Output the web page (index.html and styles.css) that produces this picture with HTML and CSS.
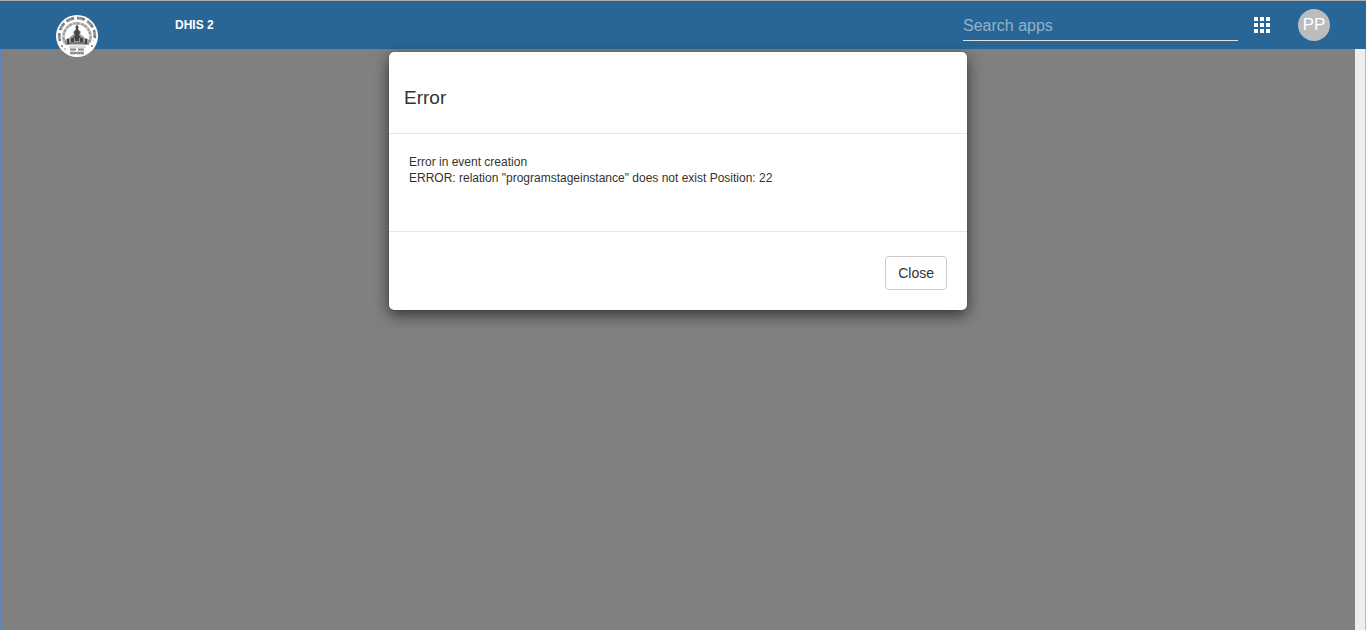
FILE: index.html
```
<!DOCTYPE html>
<html lang="en">
<head>
  <meta charset="UTF-8" />
  <meta name="viewport" content="width=device-width, initial-scale=1.0" />
  <title>DHIS 2</title>
  <link rel="stylesheet" href="styles.css">
</head>
<body>
  <header class="header">
    <a class="logo" href="#" aria-label="Home">
      <svg width="44" height="44" viewBox="0 0 44 44" fill="none">
        <circle cx="22" cy="22" r="21" fill="#fff" />
        <!-- lettering rings -->
        <path d="M5 27 A17.8 17.8 0 1 1 39 27" stroke="#aaa" stroke-width="3" stroke-dasharray="8 3" />
        <path d="M5 27 A17.8 17.8 0 1 1 39 27" stroke="#777" stroke-width="2" stroke-dasharray="2 1 1 1 3 3" />
        <path d="M10 29 A13.500 13.500 0 1 1 34 29" stroke="#ccc" stroke-width="3" />
        <path d="M10 29 A13.500 13.500 0 1 1 34 29" stroke="#999" stroke-width="2" stroke-dasharray="2 1 3 2" />
        <path d="M15 35.500h6M23 35.500h6" stroke="#888" stroke-width="2" />
        <path d="M15 39h5M22 39h7" stroke="#aaa" stroke-width="3" />
        <path d="M16 39h12" stroke="#888" stroke-width="2" stroke-dasharray="2 1 3 1" />
        <circle cx="7" cy="32" r="1" fill="#777" />
        <circle cx="37" cy="32" r="1" fill="#777" />
        <circle cx="10" cy="35" r="1" fill="#bbb" />
        <!-- emblem -->
        <path d="M22 10l2 3-1 2 3 3-1 2 4 3v2H15v-2l4-3-1-2 3-3-1-2z" fill="#999" />
        <path d="M22 11l1 2v3l2 2-1 3 2 3h-8l2-3-1-3 2-2v-3z" fill="#444" />
        <path d="M13 24h18l3 2v5H10v-5z" fill="#999" />
        <path d="M12 25h2v5h-2zM16 24h3v4h-3zM25 24h3v4h-3zM30 25h2v5h-2zM20 24h4v3h-4z" fill="#444" />
        <path d="M14 29h16" stroke="#555" />
        <path d="M15 31h14" stroke="#ddd" />
        <path d="M14 33h17" stroke="#bbb" />
      </svg>
    </a>
    <h1 class="title">DHIS 2</h1>
    <input type="text" class="search" placeholder="Search apps" aria-label="Search apps" />
    <button class="apps" aria-label="Apps">
      <svg width="16" height="16" viewBox="0 0 16 16" fill="#fff">
        <path d="M0 0h4v4H0zM6 0h4v4H6zM12 0h4v4h-4zM0 6h4v4H0zM6 6h4v4H6zM12 6h4v4h-4zM0 12h4v4H0zM6 12h4v4H6zM12 12h4v4h-4z" />
      </svg>
    </button>
    <button class="profile">PP</button>
  </header>

  <main class="content">
    <div class="overlay">
      <section class="dialog" role="dialog" aria-labelledby="dialog-title">
        <div class="dialog-header">
          <h2 id="dialog-title">Error</h2>
        </div>
        <div class="dialog-body">
          <p>Error in event creation</p>
          <p>ERROR: relation "programstageinstance" does not exist Position: 22</p>
        </div>
        <div class="dialog-footer">
          <button class="close">Close</button>
        </div>
      </section>
    </div>
  </main>
  <script>
    document.querySelector('.close').addEventListener('click', () => {
      document.querySelector('.dialog').hidden = true;
    });
  </script>
</body>
</html>
```
FILE: styles.css
```
* {
  box-sizing: border-box;
}
body {
  margin: 0;
  min-height: 100vh;
  display: flex;
  flex-direction: column;
  font-family: "Liberation Sans", Arial, sans-serif;
  font-size: 12px;
  color: #333;
}
h1, h2, p {
  margin: 0;
}
button {
  font-family: inherit;
  cursor: pointer;
}
.header {
  display: flex;
  align-items: center;
  height: 49px;
  padding: 0 36px 0 55px;
  border-top: 1px solid #aaa;
  background: #276696;
}
.logo {
  align-self: flex-start;
  height: 44px;
  margin-top: 13px;
  z-index: 1;
}
.logo svg {
  display: block;
}
.title {
  margin-left: 76px;
  font-size: 12px;
  color: #fff;
}
.search {
  width: 275px;
  height: 32px;
  margin-left: auto;
  padding: 2px 0 0;
  border: 0;
  border-bottom: 1px solid #e0e0e0;
  background: transparent;
  color: #fff;
  font-family: inherit;
  font-size: 16px;
  outline: none;
}
.search::placeholder {
  color: #93b3cb;
}
.apps {
  margin-left: 16px;
  padding: 0;
  border: 0;
  background: none;
}
.apps svg {
  display: block;
}
.profile {
  width: 32px;
  height: 32px;
  margin-left: 28px;
  padding: 0;
  border: 0;
  border-radius: 50%;
  background: #bcbcbc;
  color: #fff;
  font-size: 17px;
}
.content {
  flex: 1;
  display: flex;
  padding-right: 10px;
  border-left: 1px solid #5c80c4;
  border-right: 1px solid #a9bdec;
  background: #eee;
}
.overlay {
  flex: 1;
  padding-top: 3px;
  background: #808080;
}
.dialog {
  max-width: 578px;
  margin: 0 auto;
  border-radius: 5px;
  background: #fff;
  box-shadow: 0 5px 15px rgba(0, 0, 0, 0.6), 0 0 1px rgba(0, 0, 0, 0.6);
}
.dialog-header {
  padding: 35px 15px 24px;
  border-bottom: 1px solid #e5e5e5;
}
.dialog-header h2 {
  font-size: 19px;
  font-weight: normal;
  line-height: 22px;
}
.dialog-body {
  min-height: 97px;
  padding: 20px;
  line-height: 16px;
}
.dialog-footer {
  padding: 24px 20px 20px;
  border-top: 1px solid #e5e5e5;
  text-align: right;
}
.close {
  height: 34px;
  padding: 0 12px;
  border: 1px solid #ccc;
  border-radius: 4px;
  background: #fff;
  color: #333;
  font-size: 14px;
}
```
